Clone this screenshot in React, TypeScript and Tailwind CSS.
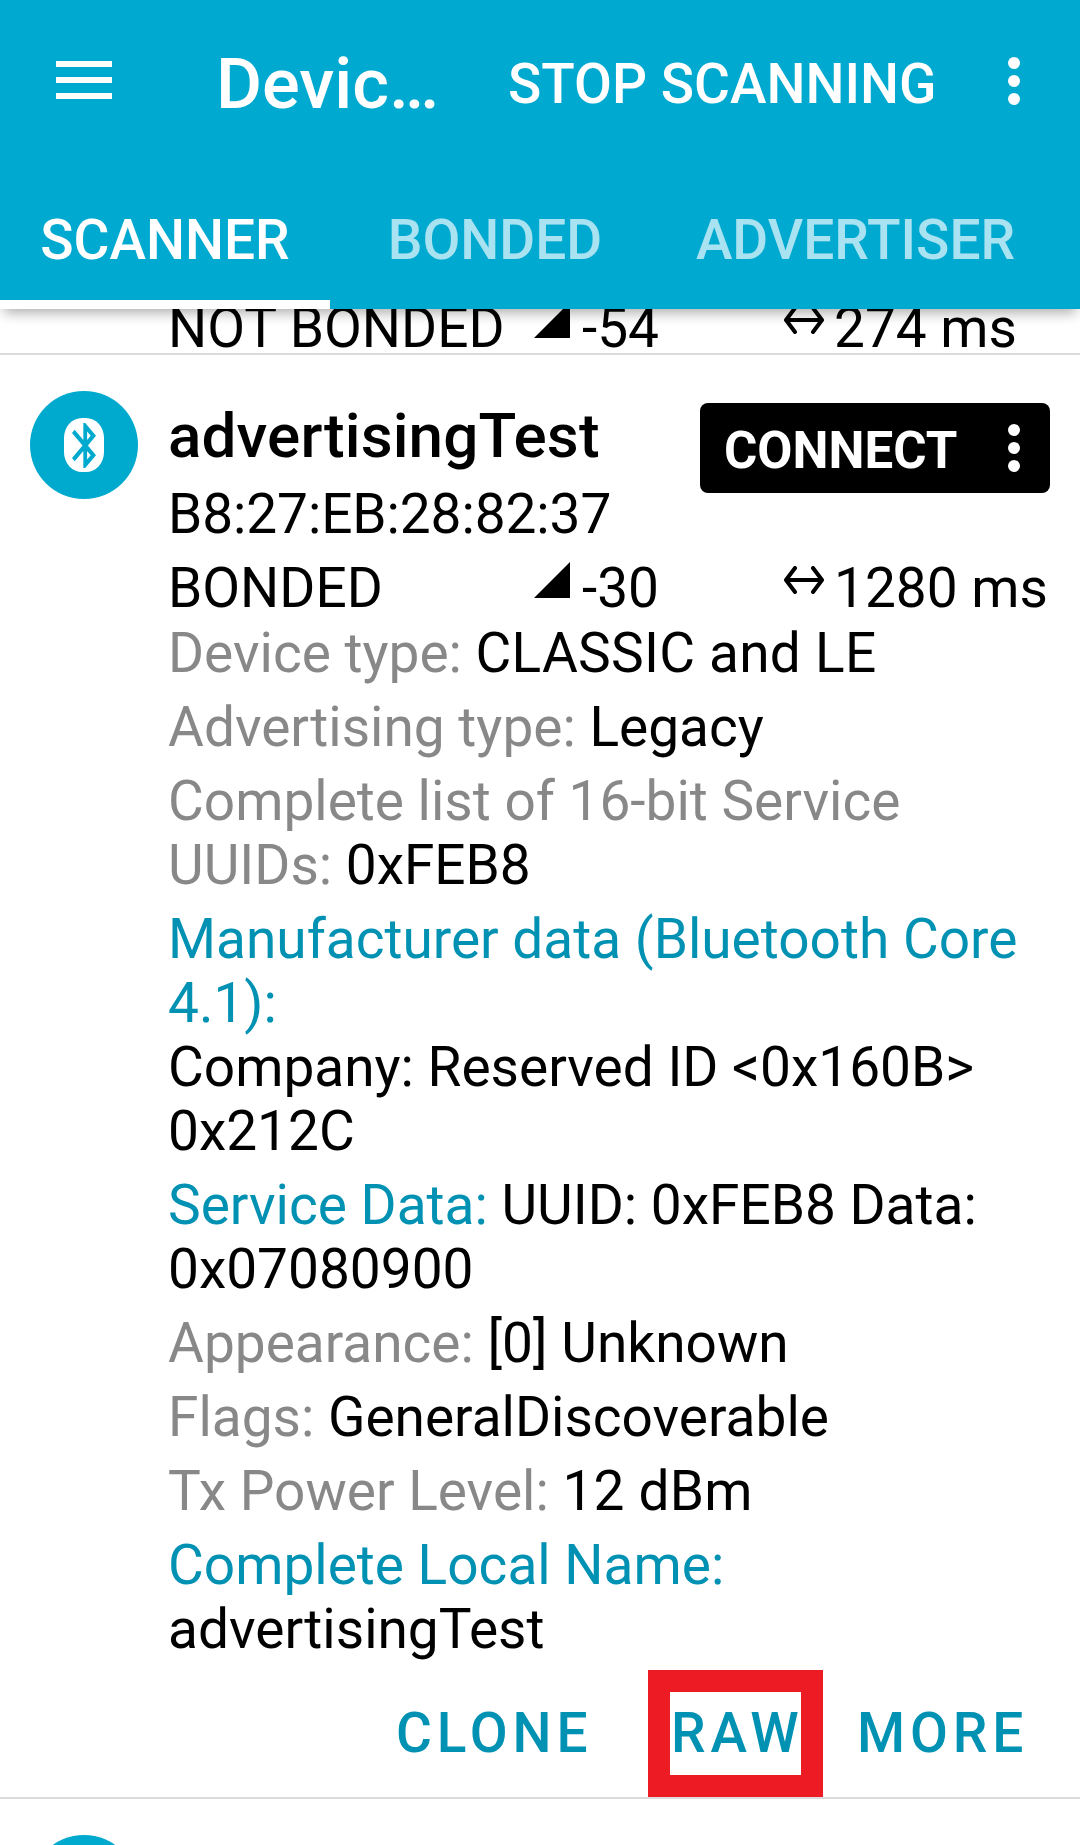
import type { ReactNode } from "react";

function MenuIcon() {
  return (
    <svg className="block h-[38px] w-14" viewBox="0 0 56 38" fill="currentColor">
      <rect width="56" height="6" />
      <rect y="16" width="56" height="6" />
      <rect y="32" width="56" height="6" />
    </svg>
  );
}

function DotsIcon() {
  return (
    <svg className="block h-12 w-3" viewBox="0 0 12 48" fill="currentColor">
      <circle cx="6" cy="6" r="6" />
      <circle cx="6" cy="24" r="6" />
      <circle cx="6" cy="42" r="6" />
    </svg>
  );
}

function Avatar() {
  return (
    <div className="flex size-[108px] shrink-0 items-center justify-center rounded-full bg-[#00a9ce]">
      <div className="flex h-[54px] w-10 items-center justify-center rounded-[18px/20px] bg-white">
        <svg
          className="h-[45px] w-6 text-[#00a9ce]"
          viewBox="5 2 12.71 20"
          preserveAspectRatio="none"
          fill="currentColor"
        >
          <path d="M17.71 7.71L12 2h-1v7.59L6.41 5 5 6.41 10.59 12 5 17.59 6.41 19 11 14.41V22h1l5.71-5.71-4.3-4.29 4.3-4.29zM13 5.83l1.88 1.88L13 9.59V5.83zm1.88 10.46L13 18.17v-3.76l1.88 1.88z" />
        </svg>
      </div>
    </div>
  );
}

function StatusRow({ status, rssi, interval }: { status: string; rssi: string; interval: string }) {
  return (
    <div className="flex h-16 whitespace-nowrap">
      <span className="w-[366px]">{status}</span>
      <svg className="mt-1.5 size-9" viewBox="0 0 36 36">
        <path d="M36 0V36H0z" />
      </svg>
      <span className="ml-3 w-[202px]">{rssi}</span>
      <svg
        className="mt-2.5 h-7 w-10"
        viewBox="0 0 40 28"
        fill="none"
        stroke="currentColor"
        strokeWidth="4"
        strokeLinecap="round"
        strokeLinejoin="round"
      >
        <path d="M11 2L2 14L11 26M29 2L38 14L29 26M3 14H37" />
      </svg>
      <span className="ml-2.5">{interval}</span>
    </div>
  );
}

function Detail({ label, link, children }: { label: string; link?: boolean; children: ReactNode }) {
  return (
    <p>
      <span className={link ? "text-[#0091b3]" : "text-[#888888]"}>{label}</span> {children}
    </p>
  );
}

export default function App() {
  return (
    <div className="flex h-[1845px] w-[1080px] flex-col overflow-hidden bg-white font-['Roboto',sans-serif] text-[55px] leading-[64px] text-black">
      <header className="relative z-10 h-[309px] shrink-0 bg-[#00a9d0] text-white shadow-[0_8px_12px_-4px_rgba(0,0,0,0.32)]">
        <div className="flex h-[168px] items-center pl-14 font-medium whitespace-nowrap">
          <div className="-mt-2">
            <MenuIcon />
          </div>
          <h1 className="ml-[104px] w-[292px] text-[70.5px] leading-[80px] font-medium">Devic…</h1>
          <button className="w-[500px] text-left">STOP SCANNING</button>
          <div className="-mt-1.5">
            <DotsIcon />
          </div>
        </div>
        <nav className="flex h-[141px] font-medium">
          <div className="w-[330px] border-b-[9px] border-white pt-10 text-center">SCANNER</div>
          <div className="w-[330px] pt-10 text-center text-[#a9e2f0]">BONDED</div>
          <div className="w-[391px] pt-10 text-center text-[#a9e2f0]">ADVERTISER</div>
        </nav>
      </header>

      <div className="-mt-[13px] h-[59px] shrink-0 border-b-2 border-[#dcdcdc] pl-[168px]">
        <StatusRow status="NOT BONDED" rssi="-54" interval="274 ms" />
      </div>

      <section className="h-[1444px] shrink-0 border-b-2 border-[#dcdcdc]">
        <div className="flex">
          <div className="pt-9 pl-[30px]">
            <Avatar />
          </div>
          <div className="ml-[30px] w-[882px] pt-[45px]">
            <div className="flex h-[127px]">
              <div className="flex w-[532px] flex-col gap-2.5">
                <h2 className="text-[62px] leading-[72px] font-medium tracking-[0.12px]">advertisingTest</h2>
                <p className="tracking-[-0.08px]">B8:27:EB:28:82:37</p>
              </div>
              <button className="mt-[3px] flex h-[90px] w-[350px] items-center rounded-lg bg-black pl-6 text-[51px] font-bold text-white">
                <span className="w-[284px] pt-1.5 text-left">CONNECT</span>
                <DotsIcon />
              </button>
            </div>
            <div className="mt-[29px]">
              <StatusRow status="BONDED" rssi="-30" interval="1280 ms" />
            </div>
            <div className="mt-px flex flex-col gap-2.5">
              <Detail label="Device type:">
                <span className="tracking-[0.25px]">CLASSIC and LE</span>
              </Detail>
              <Detail label="Advertising type:">Legacy</Detail>
              <Detail label="Complete list of 16-bit Service UUIDs:">0xFEB8</Detail>
              <Detail label="Manufacturer data (Bluetooth Core 4.1):" link>
                <br />
                Company: Reserved ID &lt;0x160B&gt; 0x212C
              </Detail>
              <Detail label="Service Data:" link>
                UUID: 0xFEB8 Data: 0x07080900
              </Detail>
              <Detail label="Appearance:">[0] Unknown</Detail>
              <Detail label="Flags:">GeneralDiscoverable</Detail>
              <Detail label="Tx Power Level:">
                <span className="tracking-[0.2px]">12 dBm</span>
              </Detail>
              <Detail label="Complete Local Name:" link>
                advertisingTest
              </Detail>
            </div>
          </div>
        </div>
        <div className="mt-[9px] flex pl-[396px] font-medium tracking-[4.9px] whitespace-nowrap text-[#0091b3]">
          <button className="w-[252px] self-start pt-[31px] text-left">CLONE</button>
          <button className="flex h-[127px] w-[175px] border-[22px] border-[#ed1c24] pt-[9px] pl-px">RAW</button>
          <button className="ml-[34px] self-start pt-[31px]">MORE</button>
        </div>
      </section>

      <section className="pt-9 pl-[30px]">
        <Avatar />
      </section>
    </div>
  );
}
